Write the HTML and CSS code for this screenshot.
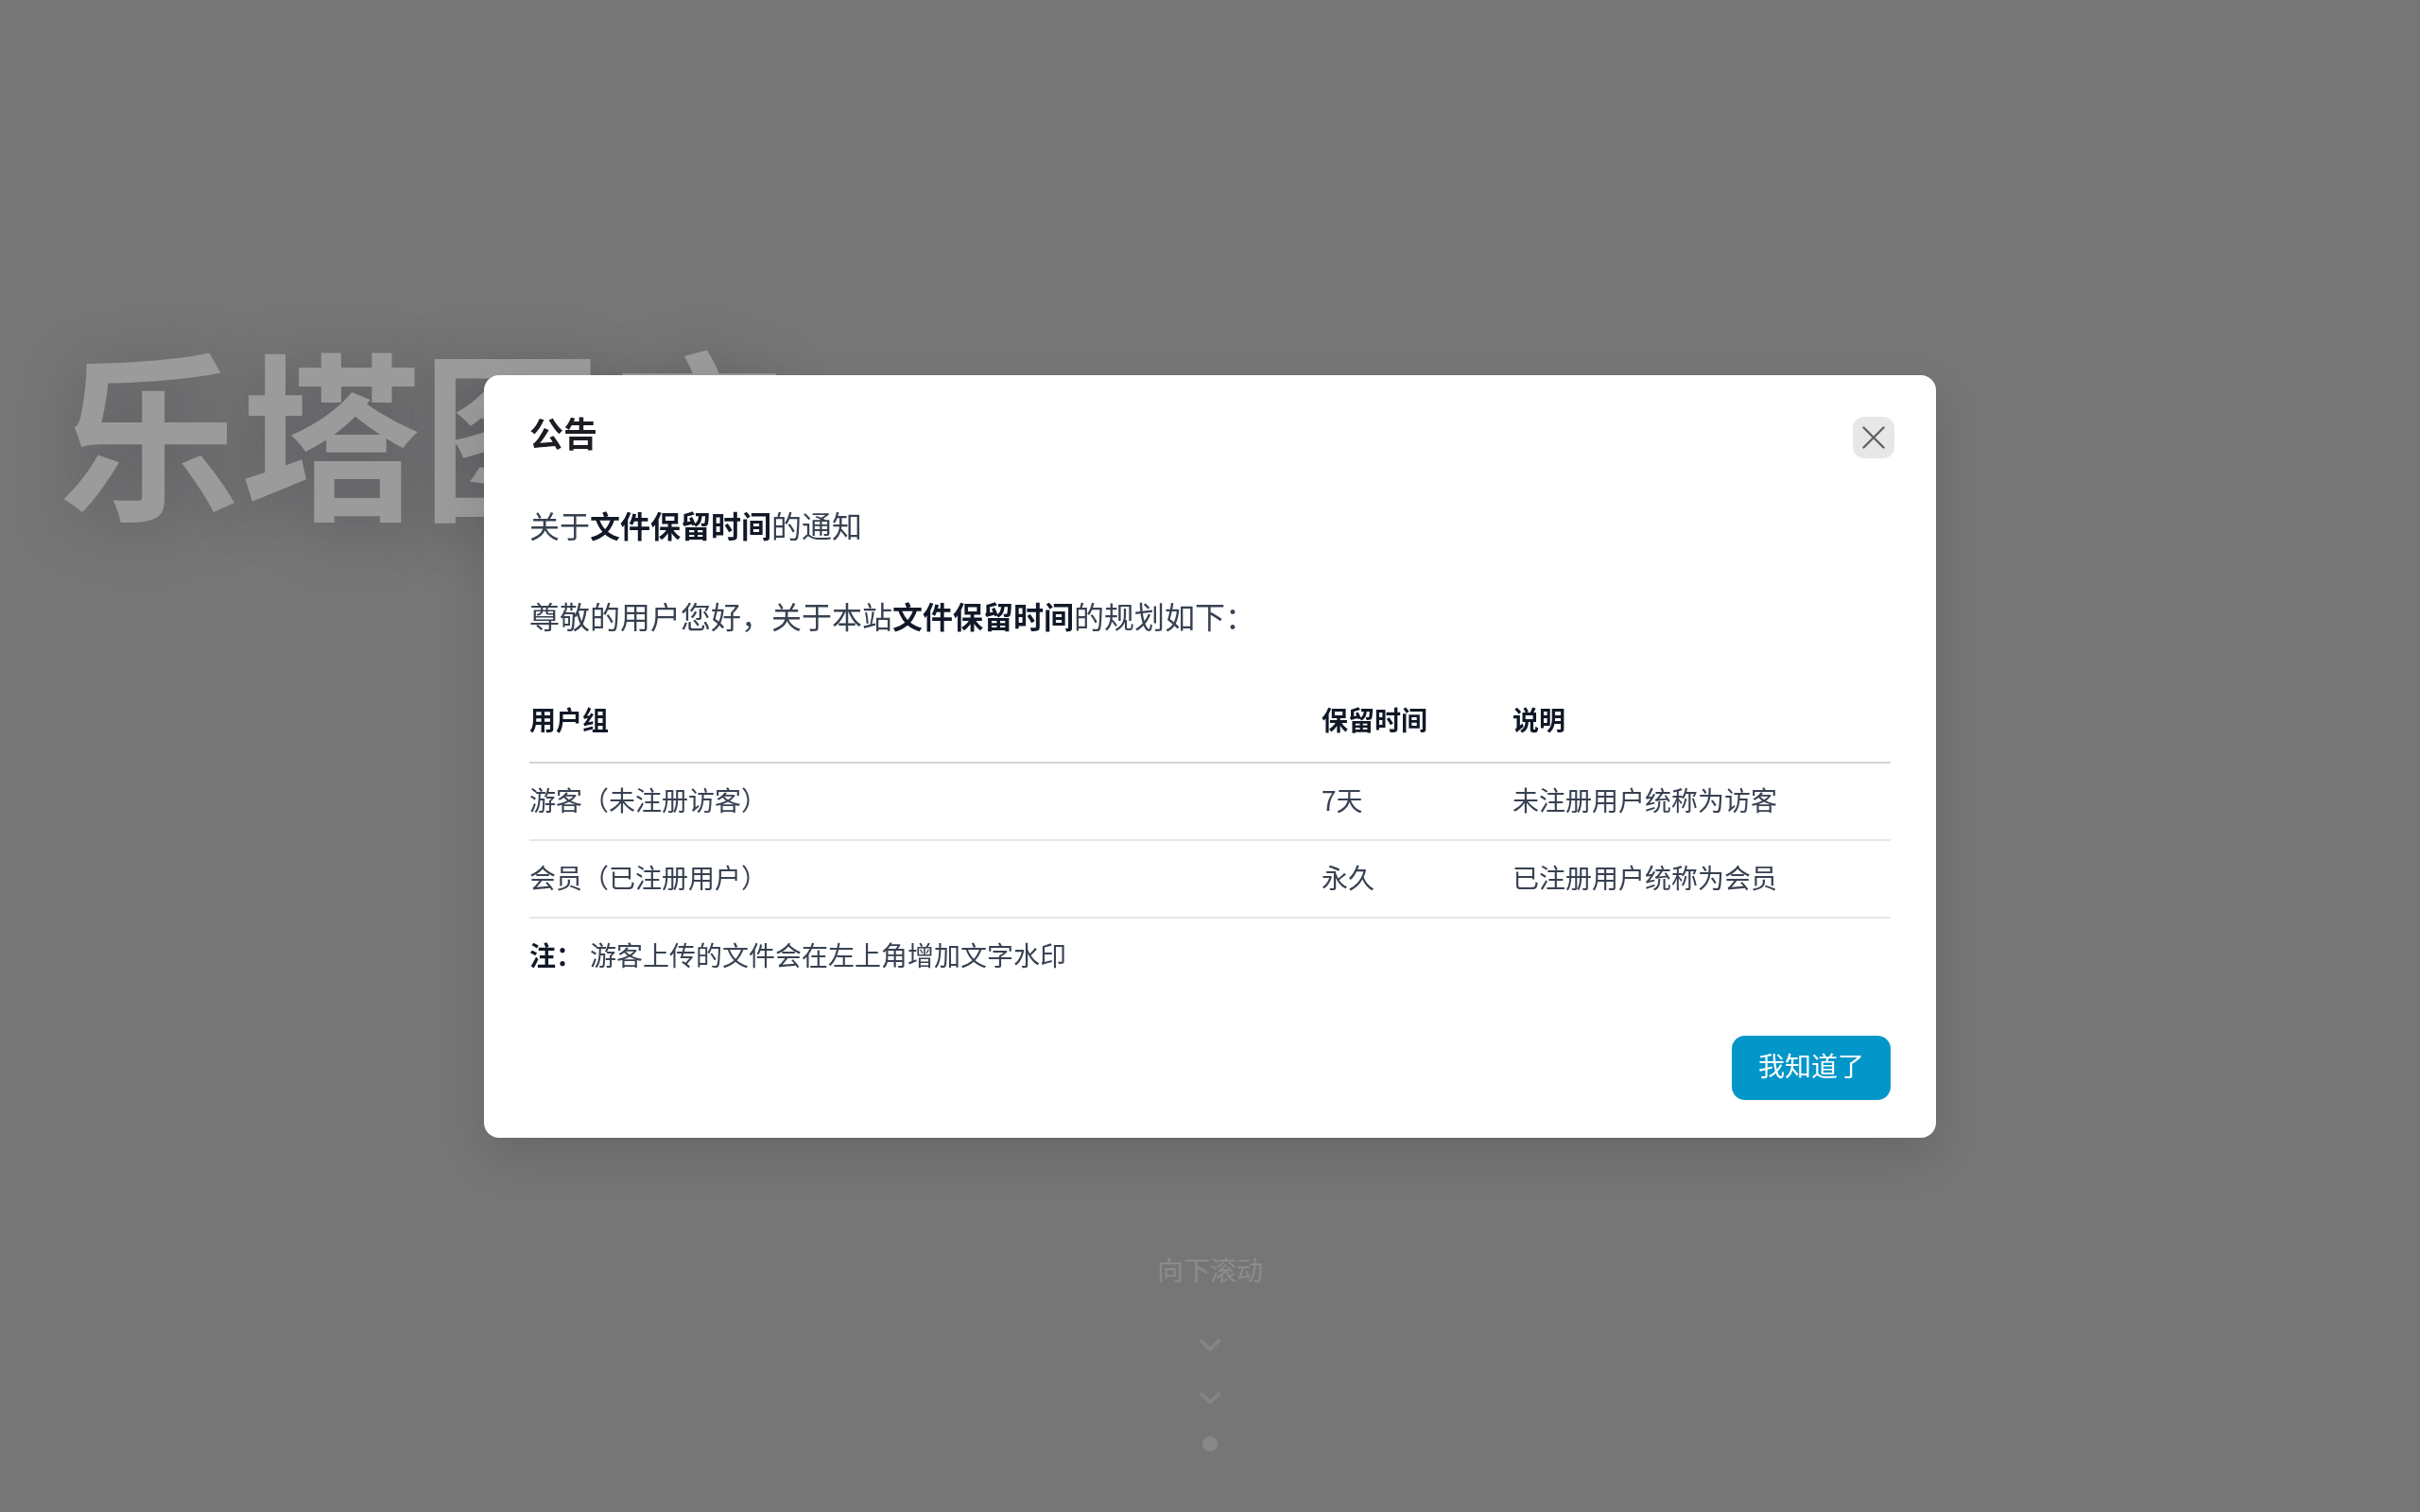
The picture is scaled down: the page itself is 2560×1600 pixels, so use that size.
FILE: index.html
```html
<!DOCTYPE html>
<html lang="zh-CN">
<head>
<meta charset="utf-8">
<title>乐塔图床</title>
<link rel="stylesheet" href="styles.css">
</head>
<body>
<div class="page">
  <h1 class="hero-title">乐塔图床</h1>
  <div class="scroll-hint">
    <span class="scroll-text">向下滚动</span>
    <svg class="chev chev-1" viewBox="0 0 24 24" width="24" height="24"><path d="M3 7 L12 16 L21 7" fill="none" stroke="currentColor" stroke-width="4" stroke-linecap="round" stroke-linejoin="round"/></svg>
    <svg class="chev chev-2" viewBox="0 0 24 24" width="24" height="24"><path d="M3 7 L12 16 L21 7" fill="none" stroke="currentColor" stroke-width="4" stroke-linecap="round" stroke-linejoin="round"/></svg>
    <span class="dot"></span>
  </div>
</div>

<div class="overlay">
  <div class="modal">
    <div class="modal-head">
      <h2 class="modal-title">公告</h2>
      <button class="close-btn" aria-label="关闭">
        <svg viewBox="0 0 24 24" width="24" height="24"><path d="M1.5 1.5 L22.5 22.5 M22.5 1.5 L1.5 22.5" fill="none" stroke="currentColor" stroke-width="2.4" stroke-linecap="round"/></svg>
      </button>
    </div>
    <div class="modal-body">
      <p class="para">关于<strong>文件保留时间</strong>的通知</p>
      <p class="para">尊敬的用户您好，关于本站<strong>文件保留时间</strong>的规划如下：</p>
      <table class="rules">
        <colgroup>
          <col class="c1"><col class="c2"><col class="c3">
        </colgroup>
        <thead>
          <tr><th>用户组</th><th>保留时间</th><th>说明</th></tr>
        </thead>
        <tbody>
          <tr><td>游客（未注册访客）</td><td>7天</td><td>未注册用户统称为访客</td></tr>
          <tr><td>会员（已注册用户）</td><td>永久</td><td>已注册用户统称为会员</td></tr>
          <tr class="note-row"><td colspan="3"><strong class="note-label">注：</strong>游客上传的文件会在左上角增加文字水印</td></tr>
        </tbody>
      </table>
    </div>
    <div class="modal-foot">
      <button class="ok-btn">我知道了</button>
    </div>
  </div>
</div>
</body>
</html>
```
FILE: styles.css
```css
* { box-sizing: border-box; }

html, body {
  margin: 0;
  padding: 0;
  width: 2560px;
  height: 1600px;
  overflow: hidden;
  background: #767676;
  font-family: "Noto Sans CJK SC", "Noto Sans", sans-serif;
}

.page {
  height: 1600px;
  display: flex;
  flex-direction: column;
}

.hero-title {
  margin: 0;
  padding: 356px 0 0 62px;
  font-size: 192px;
  line-height: 1;
  font-weight: 700;
  color: #9b9b9b;
  text-shadow: 0 10px 60px rgba(45, 50, 62, 0.35);
  white-space: nowrap;
}

.scroll-hint {
  margin-top: auto;
  display: flex;
  flex-direction: column;
  align-items: center;
  padding-bottom: 64px;
  color: #868686;
}

.scroll-text {
  font-size: 28px;
  line-height: 40px;
  color: #8c8c8c;
}

.chev { display: block; color: #848484; }
.chev-1 { margin-top: 49px; }
.chev-2 { margin-top: 32px; }

.dot {
  display: block;
  width: 16px;
  height: 16px;
  border-radius: 50%;
  background: #888888;
  margin-top: 28px;
}

/* overlay + modal */
.overlay {
  position: fixed;
  inset: 0;
  display: flex;
  align-items: center;
  justify-content: center;
}

.modal {
  width: 1536px;
  background: #ffffff;
  border-radius: 16px;
  padding: 40px 48px 40px 48px;
  box-shadow: 0 20px 50px rgba(0, 0, 0, 0.12);
}

.modal-head {
  display: flex;
  justify-content: space-between;
  align-items: flex-start;
  height: 48px;
}

.modal-title {
  margin: 0;
  font-size: 36px;
  line-height: 40px;
  font-weight: 700;
  color: #1b1d22;
}

.close-btn {
  margin-top: 4px;
  margin-right: -4px;
  width: 44px;
  height: 44px;
  border: none;
  border-radius: 12px;
  background: #e7e7e7;
  color: #616161;
  display: flex;
  align-items: center;
  justify-content: center;
  padding: 0;
}

.modal-body {
  padding-top: 42px;
  color: #374151;
}

.para {
  margin: 0 0 40px 0;
  font-size: 32px;
  line-height: 56px;
}
.para strong { color: #111827; font-weight: 700; }

.rules {
  width: 100%;
  table-layout: fixed;
  border-collapse: collapse;
  margin-top: 58px;
  font-size: 28px;
  line-height: 48px;
}
.rules .c1 { width: 822px; }
.rules .c2 { width: 202px; }
.rules .c3 { width: 416px; }

.rules th {
  text-align: left;
  font-weight: 700;
  color: #111827;
  padding: 0 16px 21px 16px;
}
.rules thead tr { border-bottom: 2px solid #d1d5db; }

.rules td {
  padding: 14px 16px 18px 16px;
  color: #374151;
  vertical-align: baseline;
}
.rules tbody tr { border-bottom: 2px solid #e5e7eb; }
.rules tbody tr:last-child { border-bottom: 0; }

.rules th:first-child, .rules td:first-child { padding-left: 0; }
.rules th:last-child, .rules td:last-child { padding-right: 0; }

.note-label {
  color: #111827;
  font-weight: 700;
  margin-right: 8px;
}

.modal-foot {
  display: flex;
  justify-content: flex-end;
  padding-top: 44px;
}

.ok-btn {
  height: 68px;
  padding: 0 28px 6px 28px;
  border: none;
  border-radius: 14px;
  background: #0396c8;
  color: #ffffff;
  font-family: inherit;
  font-size: 28px;
  line-height: 40px;
}
```
